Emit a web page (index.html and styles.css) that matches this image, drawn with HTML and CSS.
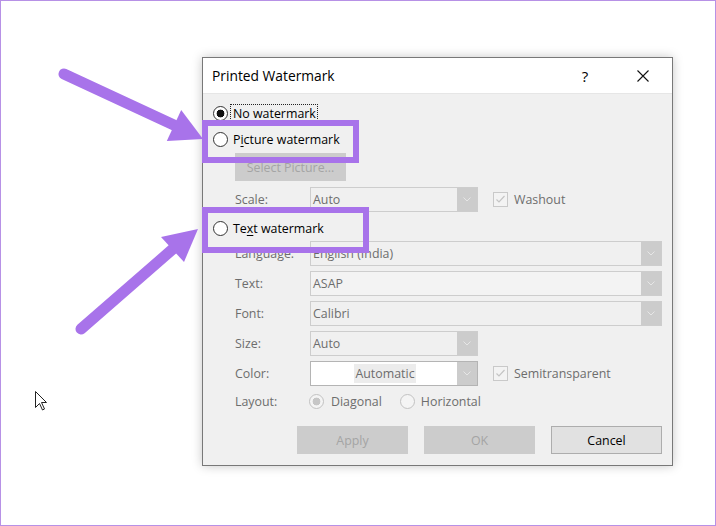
FILE: index.html
```html
<!DOCTYPE html>
<html lang="en">

<head>
    <meta charset="UTF-8">
    <title>Printed Watermark</title>
    <link rel="stylesheet" href="styles.css">
</head>

<body>
    <div class="page">
        <div class="dialog">
            <div class="titlebar">
                <span class="title">Printed Watermark</span>
                <span class="help">?</span>
                <svg class="close" width="12" height="12" viewBox="0 0 12 12">
                    <path d="M0.5 0.5L11.5 11.5M11.5 0.5L0.5 11.5" stroke="#111" stroke-width="1.1" fill="none"/>
                </svg>
            </div>
            <div class="body">
                <div class="opt"><span class="radio on"></span><span class="focus">No watermark</span></div>
                <div class="opt gap6"><span class="radio"></span><span>P<u>i</u>cture watermark</span></div>
                <button class="btn dis select">Select Picture...</button>
                <div class="row gap6">
                    <span class="lbl">Scale:</span>
                    <div class="combo short"><span class="val">Auto</span><span class="drop"><svg width="8" height="5" viewBox="0 0 8 5"><path d="M0.5 0.5L4 4L7.5 0.5" stroke="#e6e6e6" fill="none"/></svg></span></div>
                    <span class="check"><svg width="13" height="13" viewBox="0 0 13 13"><path d="M2.5 6.5L5 9L10.5 3" stroke="#c4c4c4" stroke-width="1.2" fill="none"/></svg></span>
                    <span class="dim">Washout</span>
                </div>
                <div class="opt gap6"><span class="radio"></span><span>Te<u>x</u>t watermark</span></div>
                <div class="fields">
                    <div class="row">
                        <span class="lbl">Language:</span>
                        <div class="combo wide"><span class="val">English (India)</span><span class="drop"><svg width="8" height="5" viewBox="0 0 8 5"><path d="M0.5 0.5L4 4L7.5 0.5" stroke="#e6e6e6" fill="none"/></svg></span></div>
                    </div>
                    <div class="row">
                        <span class="lbl">Text:</span>
                        <div class="combo wide light"><span class="val">ASAP</span><span class="drop"><svg width="8" height="5" viewBox="0 0 8 5"><path d="M0.5 0.5L4 4L7.5 0.5" stroke="#e6e6e6" fill="none"/></svg></span></div>
                    </div>
                    <div class="row">
                        <span class="lbl">Font:</span>
                        <div class="combo wide"><span class="val">Calibri</span><span class="drop"><svg width="8" height="5" viewBox="0 0 8 5"><path d="M0.5 0.5L4 4L7.5 0.5" stroke="#e6e6e6" fill="none"/></svg></span></div>
                    </div>
                    <div class="row">
                        <span class="lbl">Size:</span>
                        <div class="combo short"><span class="val">Auto</span><span class="drop"><svg width="8" height="5" viewBox="0 0 8 5"><path d="M0.5 0.5L4 4L7.5 0.5" stroke="#e6e6e6" fill="none"/></svg></span></div>
                    </div>
                    <div class="row">
                        <span class="lbl">Color:</span>
                        <div class="combo short color"><span class="val"><span class="hl">Automatic</span></span><span class="drop"><svg width="8" height="5" viewBox="0 0 8 5"><path d="M0.5 0.5L4 4L7.5 0.5" stroke="#e6e6e6" fill="none"/></svg></span></div>
                        <span class="check"><svg width="13" height="13" viewBox="0 0 13 13"><path d="M2.5 6.5L5 9L10.5 3" stroke="#c4c4c4" stroke-width="1.2" fill="none"/></svg></span>
                        <span class="dim">Semitransparent</span>
                    </div>
                </div>
                <div class="row layout">
                    <span class="lbl">Layout:</span>
                    <span class="radio dis on"></span><span class="dim diag">Diagonal</span>
                    <span class="radio dis"></span><span class="dim horiz">Horizontal</span>
                </div>
                <div class="buttons">
                    <button class="btn dis">Apply</button>
                    <button class="btn dis">OK</button>
                    <button class="btn">Cancel</button>
                </div>
            </div>
        </div>

        <!-- annotations drawn over the screenshot -->
        <svg class="arrows" width="716" height="526" viewBox="0 0 716 526">
            <line x1="64" y1="74" x2="176" y2="126" stroke="#a873ea" stroke-width="11" stroke-linecap="round"/>
            <polygon points="203,139 166.8,141 181.2,110" fill="#a873ea"/>
            <line x1="81" y1="329" x2="174" y2="248" stroke="#a873ea" stroke-width="11" stroke-linecap="round"/>
            <polygon points="198,229 184,262 161,237" fill="#a873ea"/>
        </svg>
        <div class="mark mark-pic"></div>
        <div class="mark mark-text"></div>
        <svg class="cursor" width="14" height="22" viewBox="0 0 14 22">
            <path d="M1.5 1.5V17.5L5.5 13.5L8.5 20L10.5 19L7.5 12.5H12.5Z" fill="#fff" stroke="#222" stroke-width="1" stroke-linejoin="round"/>
        </svg>
    </div>
</body>

</html>
```

FILE: styles.css
```css
* {
    padding: 0px;
    margin: 0px;
    box-sizing: border-box;
}

body {
    font-family: "Open Sans", "Noto Sans", sans-serif;
    font-size: 12.4px;
    color: #111;
    background: #fff;
}

.page {
    width: 716px;
    height: 526px;
    border: 1px solid #b791e6;
    position: relative;
    overflow: hidden;
}

.dialog {
    margin: 56px 0 0 201px;
    width: 471px;
    height: 409px;
    border: 1px solid #787878;
    background: #f0f0f0;
    box-shadow: 0 0 10px rgba(0, 0, 0, 0.22);
    display: flex;
    flex-direction: column;
}

.titlebar {
    height: 36px;
    background: #fff;
    border-bottom: 1px solid #e6e6e6;
    display: flex;
    align-items: center;
    padding-left: 9px;
}

.title {
    flex: 1;
    font-size: 13.8px;
    color: #000;
}

.help {
    width: 20px;
    text-align: center;
    font-size: 15px;
    margin-right: 42px;
    color: #000;
}

.close {
    margin-right: 23px;
}

.body {
    flex: 1;
    display: flex;
    flex-direction: column;
    padding: 9px 10px 10px 10px;
}

.opt {
    display: flex;
    align-items: center;
    height: 20px;
    color: #000;
}

.opt u {
    text-decoration-thickness: 1px;
    text-underline-offset: 2px;
}

.gap6 {
    margin-top: 6px;
}

.radio {
    width: 15px;
    height: 15px;
    border: 1px solid #333;
    border-radius: 50%;
    background: #fff;
    margin-right: 5px;
    flex: none;
}

.radio.on {
    background: radial-gradient(circle, #111 0 3.6px, #fff 4.2px);
}

.radio.dis {
    border-color: #c2c2c2;
    background: #f4f4f4;
}

.radio.dis.on {
    background: radial-gradient(circle, #c6c6c6 0 3.6px, #f4f4f4 4.2px);
}

.focus {
    outline: 1px dotted #222;
    outline-offset: 0px;
    margin-left: -2px;
    padding: 0 1px 0 2px;
}

.btn {
    width: 111px;
    height: 28px;
    border: 1px solid #adadad;
    background: #e1e1e1;
    font-family: inherit;
    font-size: 12.4px;
    color: #000;
}

.btn.dis {
    border-color: #cccccc;
    background: #cccccc;
    color: #a4a4a4;
}

.select {
    margin: 4px 0 0 22px;
}

.row {
    display: flex;
    align-items: center;
    height: 25px;
    margin-left: 22px;
}

.lbl {
    width: 75px;
    flex: none;
    color: #6d6d6d;
}

.dim {
    color: #6d6d6d;
}

.combo {
    display: flex;
    height: 25px;
    border: 1px solid #cdcdcd;
    background: #f0f0f0;
}

.combo.light {
    background: #f3f3f3;
}

.combo.short {
    width: 168px;
}

.combo.wide {
    width: 353px;
}

.combo .val {
    flex: 1;
    padding-left: 2px;
    line-height: 23px;
    color: #6d6d6d;
}

.combo.color {
    background: #fff;
    border-color: #b4b4b4;
}

.combo.color .val {
    text-align: center;
}

.hl {
    background: #ececec;
    padding: 1px 1px;
}

.drop {
    width: 20px;
    background: #cccccc;
    display: flex;
    align-items: center;
    justify-content: center;
}

.check {
    width: 15px;
    height: 15px;
    border: 1px solid #c9c9c9;
    background: #f3f3f3;
    margin: 0 6px 0 15px;
    display: flex;
    align-items: center;
    justify-content: center;
}

.fields {
    display: flex;
    flex-direction: column;
    gap: 5px;
    margin-top: 3px;
}

.layout {
    height: 20px;
    margin-top: 5px;
}

.layout .lbl {
    width: 74px;
}

.diag {
    margin: 0 18px 0 2px;
}

.horiz {
    margin-left: 1px;
}

.buttons {
    display: flex;
    justify-content: flex-end;
    gap: 16px;
    margin-top: 15px;
}

.arrows {
    position: absolute;
    left: -1px;
    top: -1px;
    pointer-events: none;
}

.mark {
    position: absolute;
    border: 6px solid #a873ea;
}

.mark-pic {
    left: 201px;
    top: 119px;
    width: 157px;
    height: 43px;
}

.mark-text {
    left: 201px;
    top: 206px;
    width: 167px;
    height: 46px;
}

.cursor {
    position: absolute;
    left: 33px;
    top: 389px;
}
```
